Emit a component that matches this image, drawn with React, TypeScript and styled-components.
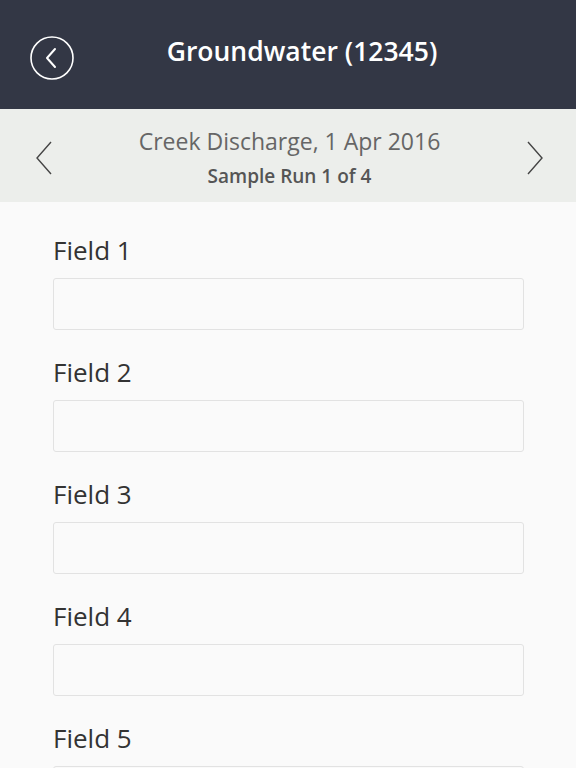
import * as React from "react";
import styled, { createGlobalStyle } from "styled-components";

const GlobalStyle = createGlobalStyle`
  html, body {
    margin: 0;
    padding: 0;
    background: #fafafa;
    font-family: "Open Sans", "Noto Sans", sans-serif;
  }
`;

const fields = ["Field 1", "Field 2", "Field 3", "Field 4", "Field 5"];

const App: React.FC = () => {
  return (
    <>
      <GlobalStyle />
      <Page>
        <Header>
          <BackButton aria-label="Back">
            <svg width="44" height="44" viewBox="0 0 44 44" fill="none">
              <circle cx="22" cy="22" r="21" stroke="#fff" strokeWidth="1.6" />
              <path d="M25 13 L17 22 L25 31" stroke="#fff" strokeWidth="2" strokeLinecap="round" strokeLinejoin="round" />
            </svg>
          </BackButton>
          <Title>Groundwater (12345)</Title>
        </Header>

        <SubHeader>
          <NavArrow aria-label="Previous">
            <svg width="18" height="34" viewBox="0 0 18 34" fill="none">
              <path d="M16 1 L2 17 L16 33" stroke="#444" strokeWidth="1.4" />
            </svg>
          </NavArrow>
          <RunInfo>
            <RunTitle>Creek Discharge, 1 Apr 2016</RunTitle>
            <RunCount>Sample Run 1 of 4</RunCount>
          </RunInfo>
          <NavArrow aria-label="Next">
            <svg width="18" height="34" viewBox="0 0 18 34" fill="none">
              <path d="M2 1 L16 17 L2 33" stroke="#444" strokeWidth="1.4" />
            </svg>
          </NavArrow>
        </SubHeader>

        <Form>
          {fields.map((f) => (
            <FieldGroup key={f}>
              <Label>{f}</Label>
              <Input />
            </FieldGroup>
          ))}
        </Form>
      </Page>
    </>
  );
};

export default App;

/* Styles */
const Page = styled.div`
  width: 576px;
  height: 768px;
  overflow: hidden;
  background: #fafafa;
`;
const Header = styled.header`
  height: 109px;
  background: #333745;
  display: flex;
  align-items: center;
  padding: 0 0 0 30px;
  box-sizing: border-box;
`;
const BackButton = styled.button`
  width: 44px;
  height: 44px;
  padding: 0;
  border: none;
  background: none;
  display: flex;
  margin-top: 6px;
`;
const Title = styled.h1`
  flex: 1;
  margin: 0 0 8px 0;
  padding-right: 46px;
  text-align: center;
  color: #ffffff;
  font-size: 26.5px;
  line-height: 36px;
  font-weight: 600;
`;
const SubHeader = styled.div`
  height: 93px;
  background: #eceeeb;
  display: flex;
  align-items: center;
  justify-content: space-between;
  padding: 0 32px 0 35px;
  box-sizing: border-box;
`;
const NavArrow = styled.button`
  border: none;
  background: none;
  padding: 0;
  display: flex;
  margin-top: 4px;
`;
const RunInfo = styled.div`
  display: flex;
  flex-direction: column;
  align-items: center;
  margin-top: 4px;
`;
const RunTitle = styled.div`
  font-size: 23px;
  color: #666666;
  line-height: 30px;
`;
const RunCount = styled.div`
  font-size: 19px;
  font-weight: 600;
  color: #555555;
  line-height: 26px;
  margin-top: 7px;
`;
const Form = styled.div`
  padding: 32px 52px 0 53px;
`;
const FieldGroup = styled.div`
  margin-bottom: 26px;
`;
const Label = styled.label`
  display: block;
  font-size: 26px;
  line-height: 32px;
  color: #333333;
  margin-bottom: 12px;
`;
const Input = styled.input`
  display: block;
  box-sizing: border-box;
  width: 100%;
  height: 52px;
  border: 1px solid #e2e2e2;
  border-radius: 3px;
  background: #fafafa;
  outline: none;
`;
